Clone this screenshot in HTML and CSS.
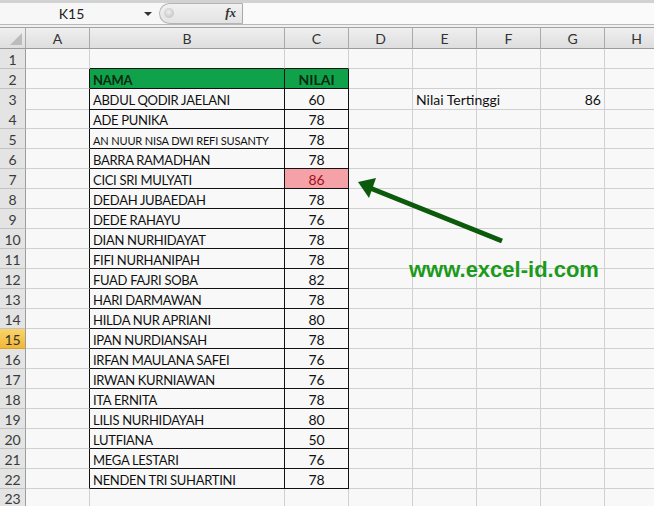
FILE: index.html
```html
<!DOCTYPE html>
<html lang="id">
<head>
    <meta charset="UTF-8">
    <title>Nilai Tertinggi - Excel</title>
    <link rel="stylesheet" href="styles.css">
</head>
<body>
    <div class="top-strip"></div>
    <div class="formula-bar">
        <div class="name-box">K15<span class="dropdown"></span></div>
        <div class="fx-box"><span class="knob"></span><span class="fx">fx</span></div>
        <div class="formula-input"></div>
    </div>
    <div class="bar-gap"></div>

    <div class="sheet">
        <div class="row col-heads">
            <div class="cell corner"><span class="corner-tri"></span></div>
            <div class="cell">A</div><div class="cell">B</div><div class="cell">C</div><div class="cell">D</div>
            <div class="cell">E</div><div class="cell">F</div><div class="cell">G</div><div class="cell">H</div>
        </div>
        <div class="row"><div class="cell rh">1</div><div class="cell"></div><div class="cell cap"></div><div class="cell cap"></div><div class="cell"></div><div class="cell"></div><div class="cell"></div><div class="cell"></div><div class="cell"></div></div>
        <div class="row"><div class="cell rh">2</div><div class="cell edge"></div><div class="cell t hd">NAMA</div><div class="cell t hd n">NILAI</div><div class="cell"></div><div class="cell"></div><div class="cell"></div><div class="cell"></div><div class="cell"></div></div>
        <div class="row"><div class="cell rh">3</div><div class="cell edge"></div><div class="cell t">ABDUL QODIR JAELANI</div><div class="cell t n">60</div><div class="cell"></div><div class="cell label">Nilai Tertinggi</div><div class="cell"></div><div class="cell num">86</div><div class="cell"></div></div>
        <div class="row"><div class="cell rh">4</div><div class="cell edge"></div><div class="cell t">ADE PUNIKA</div><div class="cell t n">78</div><div class="cell"></div><div class="cell"></div><div class="cell"></div><div class="cell"></div><div class="cell"></div></div>
        <div class="row"><div class="cell rh">5</div><div class="cell edge"></div><div class="cell t small">AN NUUR NISA DWI REFI SUSANTY</div><div class="cell t n">78</div><div class="cell"></div><div class="cell"></div><div class="cell"></div><div class="cell"></div><div class="cell"></div></div>
        <div class="row"><div class="cell rh">6</div><div class="cell edge"></div><div class="cell t">BARRA RAMADHAN</div><div class="cell t n">78</div><div class="cell"></div><div class="cell"></div><div class="cell"></div><div class="cell"></div><div class="cell"></div></div>
        <div class="row"><div class="cell rh">7</div><div class="cell edge"></div><div class="cell t">CICI SRI MULYATI</div><div class="cell t n top">86</div><div class="cell"></div><div class="cell"></div><div class="cell"></div><div class="cell"></div><div class="cell"></div></div>
        <div class="row"><div class="cell rh">8</div><div class="cell edge"></div><div class="cell t">DEDAH JUBAEDAH</div><div class="cell t n">78</div><div class="cell"></div><div class="cell"></div><div class="cell"></div><div class="cell"></div><div class="cell"></div></div>
        <div class="row"><div class="cell rh">9</div><div class="cell edge"></div><div class="cell t">DEDE RAHAYU</div><div class="cell t n">76</div><div class="cell"></div><div class="cell"></div><div class="cell"></div><div class="cell"></div><div class="cell"></div></div>
        <div class="row"><div class="cell rh">10</div><div class="cell edge"></div><div class="cell t">DIAN NURHIDAYAT</div><div class="cell t n">78</div><div class="cell"></div><div class="cell"></div><div class="cell"></div><div class="cell"></div><div class="cell"></div></div>
        <div class="row"><div class="cell rh">11</div><div class="cell edge"></div><div class="cell t">FIFI NURHANIPAH</div><div class="cell t n">78</div><div class="cell"></div><div class="cell"></div><div class="cell"></div><div class="cell"></div><div class="cell"></div></div>
        <div class="row"><div class="cell rh">12</div><div class="cell edge"></div><div class="cell t">FUAD FAJRI SOBA</div><div class="cell t n">82</div><div class="cell"></div><div class="cell"></div><div class="cell"></div><div class="cell"></div><div class="cell"></div></div>
        <div class="row"><div class="cell rh">13</div><div class="cell edge"></div><div class="cell t">HARI DARMAWAN</div><div class="cell t n">78</div><div class="cell"></div><div class="cell"></div><div class="cell"></div><div class="cell"></div><div class="cell"></div></div>
        <div class="row"><div class="cell rh">14</div><div class="cell edge"></div><div class="cell t">HILDA NUR APRIANI</div><div class="cell t n">80</div><div class="cell"></div><div class="cell"></div><div class="cell"></div><div class="cell"></div><div class="cell"></div></div>
        <div class="row"><div class="cell rh active">15</div><div class="cell edge"></div><div class="cell t">IPAN NURDIANSAH</div><div class="cell t n">78</div><div class="cell"></div><div class="cell"></div><div class="cell"></div><div class="cell"></div><div class="cell"></div></div>
        <div class="row"><div class="cell rh">16</div><div class="cell edge"></div><div class="cell t">IRFAN MAULANA SAFEI</div><div class="cell t n">76</div><div class="cell"></div><div class="cell"></div><div class="cell"></div><div class="cell"></div><div class="cell"></div></div>
        <div class="row"><div class="cell rh">17</div><div class="cell edge"></div><div class="cell t">IRWAN KURNIAWAN</div><div class="cell t n">76</div><div class="cell"></div><div class="cell"></div><div class="cell"></div><div class="cell"></div><div class="cell"></div></div>
        <div class="row"><div class="cell rh">18</div><div class="cell edge"></div><div class="cell t">ITA ERNITA</div><div class="cell t n">78</div><div class="cell"></div><div class="cell"></div><div class="cell"></div><div class="cell"></div><div class="cell"></div></div>
        <div class="row"><div class="cell rh">19</div><div class="cell edge"></div><div class="cell t">LILIS NURHIDAYAH</div><div class="cell t n">80</div><div class="cell"></div><div class="cell"></div><div class="cell"></div><div class="cell"></div><div class="cell"></div></div>
        <div class="row"><div class="cell rh">20</div><div class="cell edge"></div><div class="cell t">LUTFIANA</div><div class="cell t n">50</div><div class="cell"></div><div class="cell"></div><div class="cell"></div><div class="cell"></div><div class="cell"></div></div>
        <div class="row"><div class="cell rh">21</div><div class="cell edge"></div><div class="cell t">MEGA LESTARI</div><div class="cell t n">76</div><div class="cell"></div><div class="cell"></div><div class="cell"></div><div class="cell"></div><div class="cell"></div></div>
        <div class="row"><div class="cell rh">22</div><div class="cell edge"></div><div class="cell t">NENDEN TRI SUHARTINI</div><div class="cell t n">78</div><div class="cell"></div><div class="cell"></div><div class="cell"></div><div class="cell"></div><div class="cell"></div></div>
        <div class="row last"><div class="cell rh">23</div><div class="cell"></div><div class="cell"></div><div class="cell"></div><div class="cell"></div><div class="cell"></div><div class="cell"></div><div class="cell"></div><div class="cell"></div></div>

        <!-- floating objects on the sheet -->
        <svg class="arrow" width="654" height="478" viewBox="0 28 654 478">
            <line x1="502" y1="241" x2="370" y2="188" stroke="#0c5a0c" stroke-width="5"/>
            <polygon points="358,182 376,178 369,198" fill="#0c5a0c"/>
        </svg>
        <div class="site">www.excel-id.com</div>
    </div>
</body>
</html>
```

FILE: styles.css
```css
body {
    margin: 0;
    background: #f8f8f8;
    font-family: Lato, "Liberation Sans", sans-serif;
    font-size: 14px;
    color: #111;
    overflow: hidden;
}

/* formula bar */
.top-strip {
    height: 3px;
    background: #d2d2d2;
}
.formula-bar {
    display: flex;
    height: 21px;
    background: #f7f7f7;
    border-bottom: 1px solid #b9b9b9;
}
.name-box {
    position: relative;
    width: 157px;
    text-align: center;
    line-height: 21px;
    padding-right: 14px;
    box-sizing: border-box;
    color: #222;
}
.dropdown {
    position: absolute;
    right: 5px;
    top: 9px;
    border-left: 4px solid transparent;
    border-right: 4px solid transparent;
    border-top: 4px solid #333;
}
.fx-box {
    position: relative;
    width: 84px;
    margin-left: 2px;
    border-radius: 11px 0 0 11px;
    background: linear-gradient(#f1f1f1, #e3e3e3);
    border: 1px solid #b4b4b4;
    border-right: 1px solid #a8a8a8;
    box-sizing: border-box;
}
.knob {
    position: absolute;
    left: 4px;
    top: 4px;
    width: 10px;
    height: 10px;
    border-radius: 50%;
    background: radial-gradient(circle at 45% 40%, #eeeeee, #b8b8b8);
}
.fx {
    position: absolute;
    right: 6px;
    top: 1px;
    font-family: "Liberation Serif", serif;
    font-style: italic;
    font-weight: bold;
    font-size: 13px;
    color: #333;
}
.formula-input {
    flex: 1;
    background: #fafafa;
}
.bar-gap {
    height: 2px;
    background: #f0f0f0;
    border-bottom: 1px solid #a3a3a3;
}

/* grid */
.sheet {
    position: relative;
}
.row {
    display: grid;
    grid-template-columns: 26px 64px 195px 64px 64px 64px 64px 64px 64px;
    height: 20px;
}
.row.last {
    height: 18px;
}
.cell {
    box-sizing: border-box;
    border-right: 1px solid #d0d0d0;
    border-bottom: 1px solid #d0d0d0;
    line-height: 19px;
    padding: 1px 3px 0;
    white-space: nowrap;
    overflow: hidden;
}
.row.last .cell {
    border-bottom: 0;
    line-height: 18px;
}
.col-heads {
    height: 21px;
}
.col-heads .cell {
    background: linear-gradient(#efefef, #dedede);
    border-right-color: #a9a9a9;
    border-bottom-color: #9b9b9b;
    text-align: center;
    color: #333;
    line-height: 20px;
}
.corner {
    position: relative;
}
.corner-tri {
    position: absolute;
    right: 3px;
    bottom: 3px;
    border-left: 12px solid transparent;
    border-bottom: 12px solid #bcbcbc;
}
.rh {
    background: #e4e4e4;
    border-right-color: #9d9d9d;
    border-bottom-color: #c2c2c2;
    text-align: center;
    padding: 1px 0 0;
    color: #3a3a3a;
}
.rh.active {
    background: linear-gradient(#f9d46a, #f2b738);
    border-bottom-color: #d9a030;
    color: #333;
}

/* data table B2:C22 */
.edge {
    border-right-color: #111;
}
.cap {
    border-bottom-color: #111;
}
.t {
    border-right-color: #111;
    border-bottom-color: #111;
    font-size: 13px;
    letter-spacing: -0.3px;
    padding-top: 2px;
    line-height: 18px;
}
.n {
    text-align: center;
    font-size: 14px;
    letter-spacing: 0;
}
.hd {
    background: #0fa24a;
    font-weight: bold;
    color: #0d2a12;
}
.small {
    font-size: 11px;
    letter-spacing: -0.15px;
    padding-top: 3px;
    line-height: 17px;
}
.top {
    background: #f4a1a7;
    color: #a3101a;
}
.label {
    overflow: visible;
}
.num {
    text-align: right;
}

.arrow {
    position: absolute;
    left: 0;
    top: 0;
}
.site {
    position: absolute;
    left: 409px;
    top: 229px;
    font-family: "Liberation Sans", Arial, sans-serif;
    font-weight: bold;
    font-size: 22px;
    color: #1c9a1c;
}
```
